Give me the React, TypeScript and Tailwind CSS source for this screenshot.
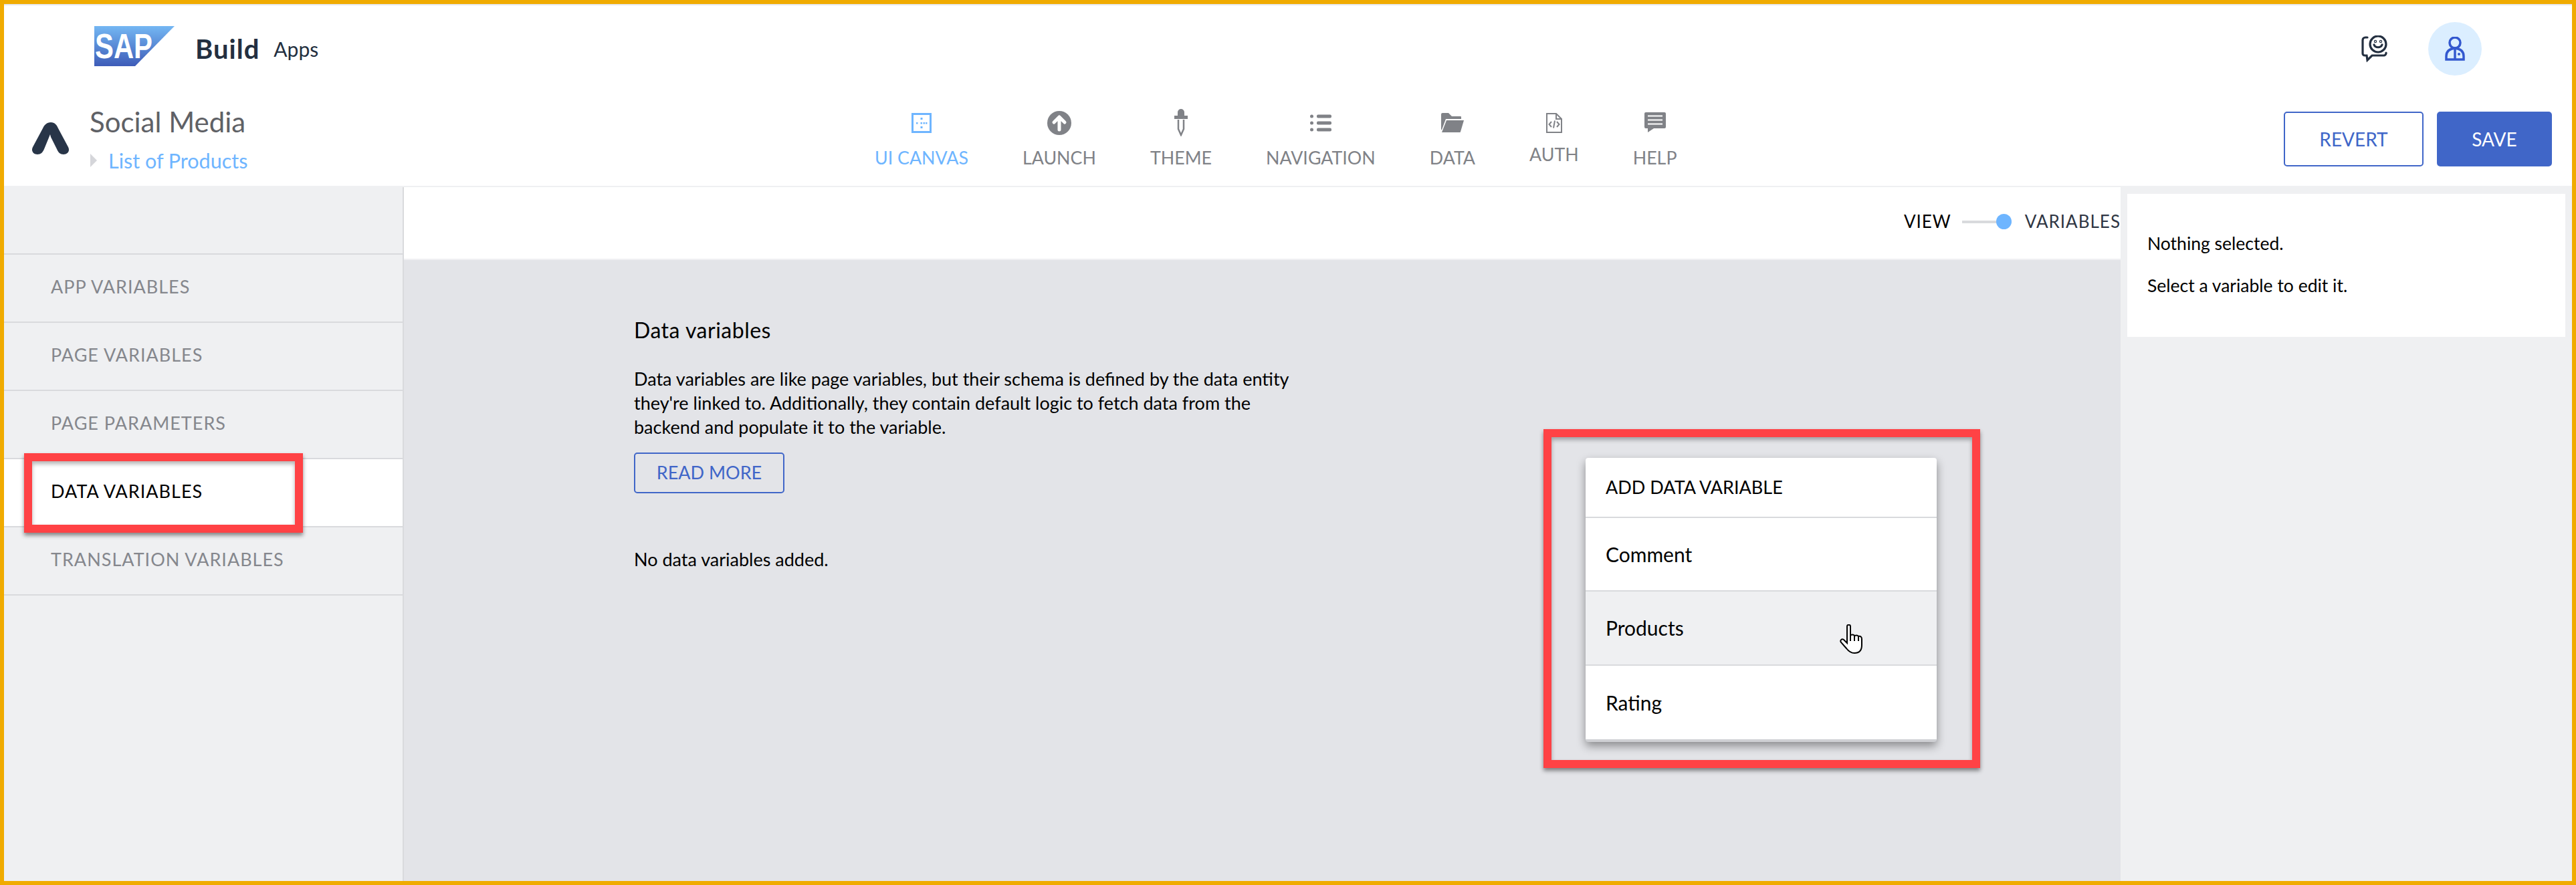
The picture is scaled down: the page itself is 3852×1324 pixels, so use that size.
const navItems = [
  { label: "UI CANVAS", icon: <CanvasIcon />, active: true },
  { label: "LAUNCH", icon: <LaunchIcon /> },
  { label: "THEME", icon: <ThemeIcon /> },
  { label: "NAVIGATION", icon: <NavIcon /> },
  { label: "DATA", icon: <FolderIcon /> },
  { label: "AUTH", icon: <AuthIcon />, raised: true },
  { label: "HELP", icon: <HelpIcon /> },
];

const sideItems = ["APP VARIABLES", "PAGE VARIABLES", "PAGE PARAMETERS", "DATA VARIABLES", "TRANSLATION VARIABLES"];

function CanvasIcon() {
  return (
    <svg width="30" height="30" viewBox="0 0 30 30" fill="#6eb5ff">
      <path fillRule="evenodd" d="M0 0h30v30H0zM3 3v24h24V3z" />
      <rect x="13.5" y="7" width="3" height="3" />
      <rect x="7" y="14" width="2.5" height="2.5" />
      <rect x="13.5" y="14" width="2.5" height="2.5" />
      <rect x="17.5" y="14" width="2.5" height="2.5" />
      <rect x="21" y="14" width="2.5" height="2.5" />
      <rect x="13.5" y="20" width="3" height="3" />
    </svg>
  );
}

function LaunchIcon() {
  return (
    <svg width="36" height="36" viewBox="0 0 36 36">
      <circle cx="18" cy="18" r="18" fill="#808287" />
      <path d="M18 28V10M10 17l8-8 8 8" stroke="#fff" strokeWidth="5" fill="none" strokeLinecap="round" strokeLinejoin="round" />
    </svg>
  );
}

function ThemeIcon() {
  return (
    <svg width="20" height="41" viewBox="0 0 20 41" fill="#808287">
      <path d="M5 5a5 5 0 0 1 10 0v5h5v5H0v-5h5z" />
      <path d="M6 16v14l4 9 4-9V16" fill="none" stroke="#808287" strokeWidth="2.5" />
    </svg>
  );
}

function NavIcon() {
  return (
    <svg width="32" height="26" viewBox="0 0 32 26" fill="#808287">
      <circle cx="2.5" cy="3" r="2.5" />
      <circle cx="2.5" cy="13" r="2.5" />
      <circle cx="2.5" cy="23" r="2.5" />
      <rect x="10" y="0.5" width="22" height="5" rx="2" />
      <rect x="10" y="10.5" width="22" height="5" rx="2" />
      <rect x="10" y="20.5" width="22" height="5" rx="2" />
    </svg>
  );
}

function FolderIcon() {
  return (
    <svg width="34" height="29" viewBox="0 0 34 29" fill="#808287">
      <path d="M0 2a2 2 0 0 1 2-2h9l5 5h13a1 1 0 0 1 1 1v3H7L1 25H0z" />
      <path d="M8 11h26l-5 17a1 1 0 0 1-1 1H1z" />
    </svg>
  );
}

function AuthIcon() {
  return (
    <svg width="24" height="30" viewBox="0 0 24 30" fill="none" stroke="#808287" strokeWidth="2">
      <path d="M1 1h14l8 8v20H1z" />
      <path d="M15 1v8h8" />
      <path d="M8 13l-3.5 4 3.5 4M16 13l3.5 4-3.5 4M13 11.5l-2 11" />
    </svg>
  );
}

function HelpIcon() {
  return (
    <svg width="32" height="31" viewBox="0 0 32 31" fill="#808287">
      <path d="M2 0h28a2 2 0 0 1 2 2v20a2 2 0 0 1-2 2H14L5 30v-6H2a2 2 0 0 1-2-2V2a2 2 0 0 1 2-2z" />
      <path d="M5 5.5h22M5 11.5h22M5 17.5h22" stroke="#fff" strokeWidth="2.2" />
    </svg>
  );
}

function SapLogo() {
  return (
    <svg width="120" height="60" viewBox="0 0 120 60">
      <defs>
        <linearGradient id="sapFill" x1="0" y1="0" x2="0" y2="1">
          <stop offset="0" stopColor="#74b7f3" />
          <stop offset="1" stopColor="#3e5cb8" />
        </linearGradient>
      </defs>
      <path d="M0 0h120L61 60H0z" fill="url(#sapFill)" />
      <text x="1" y="48" fill="#fff" fontFamily="Liberation Sans" fontWeight="700" fontSize="52" textLength="86" lengthAdjust="spacingAndGlyphs">SAP</text>
    </svg>
  );
}

function AppLogo() {
  return (
    <svg width="56" height="48" viewBox="0 0 56 48" fill="#283548">
      <path d="M28 0c6 0 9 4 11 9l15 28c3 6-1 11-7 11-5 0-8-3-10-8L28 22l-1-4-2 5-7 17c-2 5-5 8-10 8-6 0-10-5-7-11L16 9c2-5 6-9 12-9z" />
    </svg>
  );
}

function FeedbackIcon() {
  return (
    <svg width="40" height="40" viewBox="0 0 40 40" fill="none" stroke="#232f40" strokeWidth="3.2" strokeLinecap="round">
      <path d="M9 3H6a4 4 0 0 0-4 4v20a3 3 0 0 0 3 3h3l1 7 7-7h18a4 4 0 0 0 3-3v-1" />
      <circle cx="25" cy="13" r="12" />
      <path d="M19 14c2 5 10 5 12 0" />
      <circle cx="21" cy="9" r="0.6" />
      <circle cx="29" cy="9" r="0.6" />
    </svg>
  );
}

function UserIcon() {
  return (
    <svg width="30" height="36" viewBox="0 0 30 36" fill="none" stroke="#3358cf" strokeWidth="3.5">
      <circle cx="15" cy="9" r="8" />
      <path d="M2 34v-5c0-7 5-11 13-12 8 1 13 5 13 12v5z" />
      <path d="M15 17v17" />
      <circle cx="21" cy="26" r="2" fill="#3358cf" stroke="none" />
    </svg>
  );
}

function HandCursor() {
  return (
    <svg width="34" height="44" viewBox="0 0 34 44" fill="#fff" stroke="#000" strokeWidth="2">
      <path d="M11 3c0-3 5-3 5 0v13c3-1 5-1 6 1 3-1 5-1 6 1 3-1 5 1 5 4v9c0 8-4 12-11 12-6 0-9-3-12-7l-8-9c-2-3 1-6 4-4l5 5z" />
      <path d="M16 16v9M22 17v8M28 18v7" />
    </svg>
  );
}

export default function App() {
  return (
    <div className="relative h-[1324px] w-[3852px] overflow-hidden border-[6px] border-[#f0ab00] bg-white font-['Lato',sans-serif] text-black">
      <div className="h-[2px] bg-[#e6e7ea]" />

      {/* Top bar */}
      <div className="flex h-[130px] items-center pl-[135px] pr-[135px]">
        <div className="-mt-[8px]">
          <SapLogo />
        </div>
        <span className="ml-[31px] text-[40px] font-bold leading-none tracking-[1px] text-[#232f40]">Build</span>
        <span className="ml-[21px] text-[30px] leading-none text-[#232f40]">Apps</span>
        <div className="ml-auto flex items-center gap-[60px]">
          <FeedbackIcon />
          <div className="flex h-[80px] w-[80px] items-center justify-center rounded-full bg-[#dbeeff]">
            <UserIcon />
          </div>
        </div>
      </div>

      {/* App bar */}
      <div className="flex h-[142px] border-b-[2px] border-[#eff0f2]">
        <div className="flex w-[1302px] shrink-0 pl-[42px] pt-[45px]">
          <AppLogo />
        </div>
        <div className="flex gap-[81px] pt-[25px]">
          {navItems.map((item) => (
            <div key={item.label} className="flex flex-col items-center">
              <div className="flex h-[41px] items-center">{item.icon}</div>
              <span
                className={
                  (item.active ? "text-[#6eb5ff] " : "text-[#808287] ") +
                  (item.raised ? "mt-[7px] " : "mt-[12px] ") +
                  "text-[26.8px] leading-[40px]"
                }
              >
                {item.label}
              </span>
            </div>
          ))}
        </div>
        <div className="ml-auto flex gap-[20px] pr-[30px] pt-[29px]">
          <button className="h-[82px] w-[209px] rounded-[5px] border-[2px] border-[#4066c8] text-[28px] text-[#4066c8]">REVERT</button>
          <button className="h-[82px] w-[172px] rounded-[5px] bg-[#4066c8] text-[28px] text-white">SAVE</button>
        </div>
      </div>

      {/* Project title sits over the app bar */}
      <div className="absolute left-[128px] top-[151px]">
        <div className="text-[42px] leading-[50px] text-[#5f6166]">Social Media</div>
        <div className="ml-[1px] mt-[15px] flex items-center gap-[17px]">
          <span className="h-0 w-0 border-y-[10px] border-l-[10px] border-y-transparent border-l-[#d5d6da]" />
          <span className="text-[30.5px] leading-[36px] text-[#6eb5ff]">List of Products</span>
        </div>
      </div>

      <div className="flex h-[1038px]">
        {/* Sidebar */}
        <aside className="w-[598px] shrink-0 border-r-[2px] border-[#d9dadd] bg-[#eff0f2] pt-[99px]">
          {sideItems.map((name) => (
            <div
              key={name}
              className={
                (name === "DATA VARIABLES" ? "bg-white text-black " : "text-[#85878d] ") +
                "flex h-[102px] items-start border-t-[2px] border-[#d9dadd] pl-[70px] pt-[32px] text-[27px] leading-[32px] tracking-[1px] last:h-[104px] last:border-b-[2px]"
              }
            >
              {name}
            </div>
          ))}
        </aside>

        {/* Centre */}
        <main className="flex min-w-0 flex-1 flex-col">
          <div className="flex h-[109px] shrink-0 items-center justify-end border-b-[2px] border-[#f0f0f3] pb-[4px]">
            <span className="text-[26px] tracking-[1px] text-black">VIEW</span>
            <div className="relative ml-[16px] h-[4px] w-[74px] bg-[#d9dadd]">
              <span className="absolute -top-[10px] right-0 h-[23px] w-[23px] rounded-full bg-[#6eb5ff]" />
            </div>
            <span className="ml-[20px] text-[26px] tracking-[1px] text-[#2f3643]">VARIABLES</span>
          </div>
          <div className="relative flex-1 bg-[#e3e4e8] pl-[344px] pt-[84px]">
            <h2 className="text-[32px] font-normal leading-[42px] tracking-[0.5px]">Data variables</h2>
            <p className="mt-[34px] w-[990px] text-[27px] leading-[36px]">
              Data variables are like page variables, but their schema is defined by the data entity they're linked to. Additionally, they contain default logic to fetch data from the backend and populate it to the variable.
            </p>
            <button className="mt-[20px] block h-[61px] w-[225px] rounded-[5px] border-[2px] border-[#4066c8] text-[27px] text-[#4066c8]">READ MORE</button>
            <p className="mt-[81px] text-[27px] leading-[36px]">No data variables added.</p>

            {/* Add data variable menu */}
            <div className="absolute left-[1767px] top-[296px] w-[525px] overflow-hidden rounded-[4px] border-b-[4px] border-[#cfd0d4] bg-white shadow-[0_6px_14px_rgba(0,0,0,0.4)]">
              <div className="flex h-[90px] items-center border-b-[2px] border-[#d9dadd] pl-[30px] text-[27px]">ADD DATA VARIABLE</div>
              <div className="flex h-[110px] items-center border-b-[2px] border-[#d9dadd] pl-[30px] text-[30px]">Comment</div>
              <div className="relative flex h-[111px] items-center border-b-[2px] border-[#d9dadd] bg-[#eff0f2] pl-[30px] text-[30px]">
                Products
                <span className="absolute left-[380px] top-[49px]">
                  <HandCursor />
                </span>
              </div>
              <div className="flex h-[110px] items-center pl-[30px] text-[30px]">Rating</div>
            </div>
          </div>
        </main>

        {/* Inspector */}
        <aside className="w-[675px] shrink-0 bg-[#eff0f2] p-[10px]">
          <div className="h-[214px] bg-white px-[30px] pt-[56px] text-[26.5px] leading-[36px]">
            <p>Nothing selected.</p>
            <p className="mt-[27px]">Select a variable to edit it.</p>
          </div>
        </aside>
      </div>

      {/* Red callouts */}
      <div className="absolute left-[30px] top-[672px] h-[119px] w-[417px] border-[12px] border-[#ff4245] shadow-[0_4px_6px_rgba(0,0,0,0.45),inset_0_4px_6px_rgba(0,0,0,0.3)]" />
      <div className="absolute left-[2302px] top-[636px] h-[507px] w-[653px] border-[12px] border-[#ff4245] shadow-[0_4px_6px_rgba(0,0,0,0.45),inset_0_4px_6px_rgba(0,0,0,0.3)]" />
    </div>
  );
}
